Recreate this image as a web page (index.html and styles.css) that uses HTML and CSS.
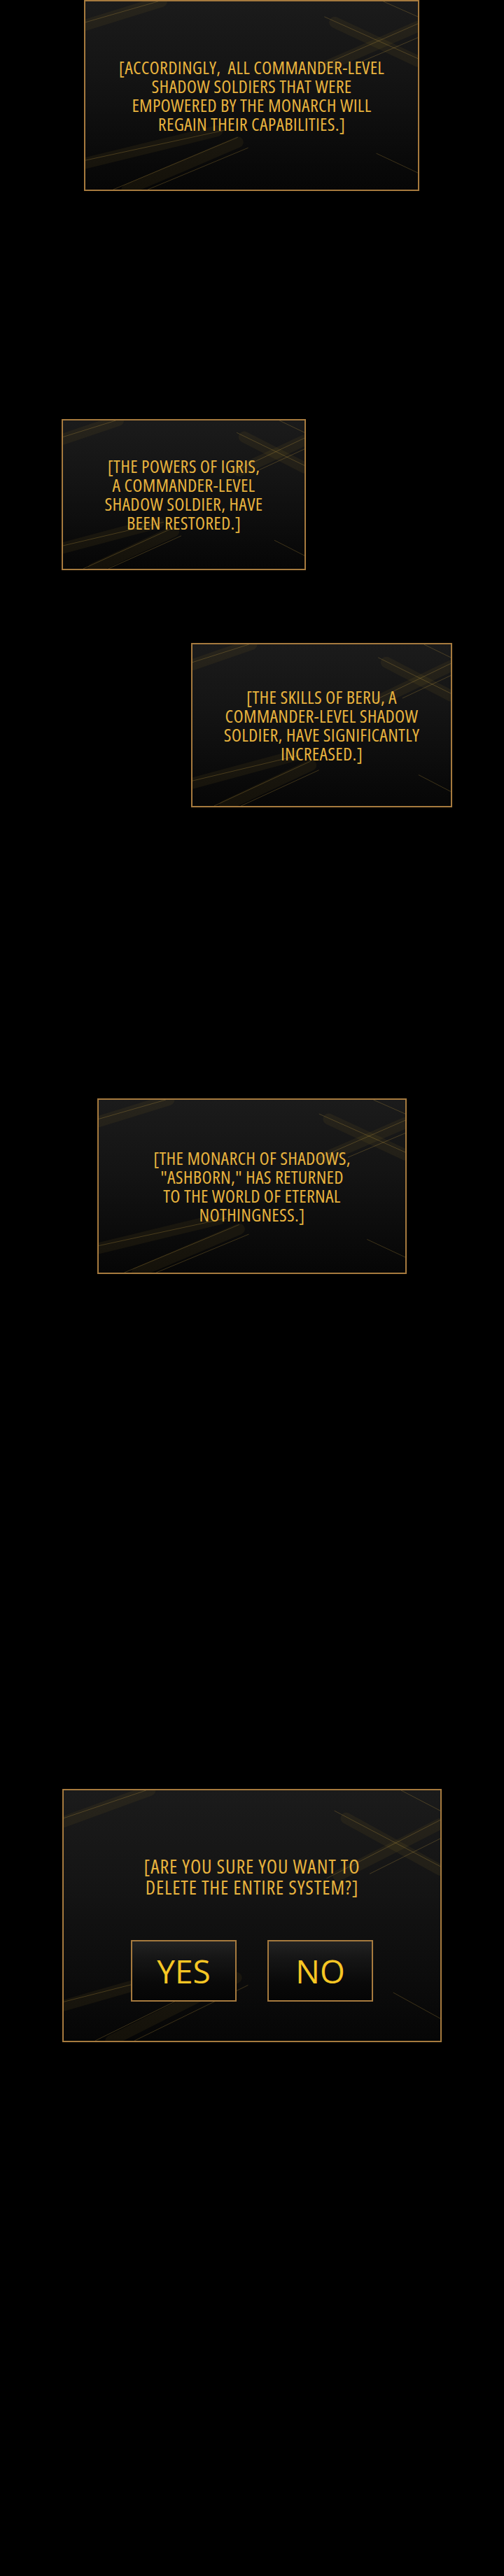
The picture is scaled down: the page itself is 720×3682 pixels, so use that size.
FILE: index.html
```html
<!DOCTYPE html>
<html lang="en">
<head>
<meta charset="utf-8">
<title>System</title>
<link rel="stylesheet" href="styles.css">
</head>
<body>
<main class="page">

  <section class="panel p1">
    <svg class="streaks" viewBox="0 0 480 270" preserveAspectRatio="none" aria-hidden="true">
      <g class="glow">
        <line x1="0" y1="34" x2="110" y2="0"/>
        <line x1="360" y1="30" x2="480" y2="86"/>
        <line x1="350" y1="92" x2="480" y2="36"/>
        <line x1="0" y1="232" x2="190" y2="186"/>
        <line x1="60" y1="270" x2="220" y2="202"/>
      </g>
      <g class="lines">
        <line x1="0" y1="30" x2="105" y2="0"/>
        <line x1="345" y1="22" x2="480" y2="82"/>
        <line x1="335" y1="95" x2="480" y2="32"/>
        <line x1="390" y1="90" x2="480" y2="52"/>
        <line x1="430" y1="0" x2="480" y2="22"/>
        <line x1="0" y1="228" x2="200" y2="185"/>
        <line x1="40" y1="270" x2="220" y2="195"/>
        <line x1="90" y1="270" x2="235" y2="210"/>
        <line x1="420" y1="218" x2="480" y2="246"/>
      </g>
    </svg>
    <p class="msg">[ACCORDINGLY,&nbsp; ALL COMMANDER-LEVEL<br>SHADOW SOLDIERS THAT WERE<br>EMPOWERED BY THE MONARCH WILL<br>REGAIN THEIR CAPABILITIES.]</p>
  </section>

  <section class="panel p2">
    <svg class="streaks" viewBox="0 0 480 270" preserveAspectRatio="none" aria-hidden="true">
      <g class="glow">
        <line x1="0" y1="34" x2="110" y2="0"/>
        <line x1="360" y1="30" x2="480" y2="86"/>
        <line x1="350" y1="92" x2="480" y2="36"/>
        <line x1="0" y1="232" x2="190" y2="186"/>
        <line x1="60" y1="270" x2="220" y2="202"/>
      </g>
      <g class="lines">
        <line x1="0" y1="30" x2="105" y2="0"/>
        <line x1="345" y1="22" x2="480" y2="82"/>
        <line x1="335" y1="95" x2="480" y2="32"/>
        <line x1="390" y1="90" x2="480" y2="52"/>
        <line x1="430" y1="0" x2="480" y2="22"/>
        <line x1="0" y1="228" x2="200" y2="185"/>
        <line x1="40" y1="270" x2="220" y2="195"/>
        <line x1="90" y1="270" x2="235" y2="210"/>
        <line x1="420" y1="218" x2="480" y2="246"/>
      </g>
    </svg>
    <p class="msg">[THE POWERS OF IGRIS,<br>A COMMANDER-LEVEL<br>SHADOW SOLDIER, HAVE<br>BEEN RESTORED.]</p>
  </section>

  <section class="panel p3">
    <svg class="streaks" viewBox="0 0 480 270" preserveAspectRatio="none" aria-hidden="true">
      <g class="glow">
        <line x1="0" y1="34" x2="110" y2="0"/>
        <line x1="360" y1="30" x2="480" y2="86"/>
        <line x1="350" y1="92" x2="480" y2="36"/>
        <line x1="0" y1="232" x2="190" y2="186"/>
        <line x1="60" y1="270" x2="220" y2="202"/>
      </g>
      <g class="lines">
        <line x1="0" y1="30" x2="105" y2="0"/>
        <line x1="345" y1="22" x2="480" y2="82"/>
        <line x1="335" y1="95" x2="480" y2="32"/>
        <line x1="390" y1="90" x2="480" y2="52"/>
        <line x1="430" y1="0" x2="480" y2="22"/>
        <line x1="0" y1="228" x2="200" y2="185"/>
        <line x1="40" y1="270" x2="220" y2="195"/>
        <line x1="90" y1="270" x2="235" y2="210"/>
        <line x1="420" y1="218" x2="480" y2="246"/>
      </g>
    </svg>
    <p class="msg">[THE SKILLS OF BERU, A<br>COMMANDER-LEVEL SHADOW<br>SOLDIER, HAVE SIGNIFICANTLY<br>INCREASED.]</p>
  </section>

  <section class="panel p4">
    <svg class="streaks" viewBox="0 0 480 270" preserveAspectRatio="none" aria-hidden="true">
      <g class="glow">
        <line x1="0" y1="34" x2="110" y2="0"/>
        <line x1="360" y1="30" x2="480" y2="86"/>
        <line x1="350" y1="92" x2="480" y2="36"/>
        <line x1="0" y1="232" x2="190" y2="186"/>
        <line x1="60" y1="270" x2="220" y2="202"/>
      </g>
      <g class="lines">
        <line x1="0" y1="30" x2="105" y2="0"/>
        <line x1="345" y1="22" x2="480" y2="82"/>
        <line x1="335" y1="95" x2="480" y2="32"/>
        <line x1="390" y1="90" x2="480" y2="52"/>
        <line x1="430" y1="0" x2="480" y2="22"/>
        <line x1="0" y1="228" x2="200" y2="185"/>
        <line x1="40" y1="270" x2="220" y2="195"/>
        <line x1="90" y1="270" x2="235" y2="210"/>
        <line x1="420" y1="218" x2="480" y2="246"/>
      </g>
    </svg>
    <p class="msg">[THE MONARCH OF SHADOWS,<br>"ASHBORN," HAS RETURNED<br>TO THE WORLD OF ETERNAL<br>NOTHINGNESS.]</p>
  </section>

  <section class="panel p5">
    <svg class="streaks" viewBox="0 0 480 270" preserveAspectRatio="none" aria-hidden="true">
      <g class="glow">
        <line x1="0" y1="34" x2="110" y2="0"/>
        <line x1="360" y1="30" x2="480" y2="86"/>
        <line x1="350" y1="92" x2="480" y2="36"/>
        <line x1="0" y1="232" x2="190" y2="186"/>
        <line x1="60" y1="270" x2="220" y2="202"/>
      </g>
      <g class="lines">
        <line x1="0" y1="30" x2="105" y2="0"/>
        <line x1="345" y1="22" x2="480" y2="82"/>
        <line x1="335" y1="95" x2="480" y2="32"/>
        <line x1="390" y1="90" x2="480" y2="52"/>
        <line x1="430" y1="0" x2="480" y2="22"/>
        <line x1="0" y1="228" x2="200" y2="185"/>
        <line x1="40" y1="270" x2="220" y2="195"/>
        <line x1="90" y1="270" x2="235" y2="210"/>
        <line x1="420" y1="218" x2="480" y2="246"/>
      </g>
    </svg>
    <p class="msg msg-lg">[ARE YOU SURE YOU WANT TO<br>DELETE THE ENTIRE SYSTEM?]</p>
    <div class="choices">
      <button class="choice" type="button">YES</button>
      <button class="choice" type="button">NO</button>
    </div>
  </section>

</main>
</body>
</html>
```
FILE: styles.css
```css
html, body {
  margin: 0;
  padding: 0;
  background: #000;
}

.page {
  display: flex;
  flex-direction: column;
  align-items: flex-start;
  height: 3682px;
  background: #000;
  font-family: "Open Sans", "DejaVu Sans", sans-serif;
}

.panel {
  position: relative;
  box-sizing: border-box;
  display: flex;
  flex-direction: column;
  align-items: center;
  justify-content: center;
  border: 2px solid #a67a3e;
  background: linear-gradient(180deg, #1b1b1b 0%, #141414 40%, #0b0b0b 78%, #060606 100%);
  overflow: hidden;
}

.p1 { margin: 0 0 0 120px; width: 479px; height: 273px; }
.p2 { margin: 326px 0 0 88px; width: 349px; height: 216px; }
.p3 { margin: 104px 0 0 273px; width: 373px; height: 235px; }
.p4 { margin: 416px 0 0 139px; width: 442px; height: 251px; }
.p5 {
  margin: 736px 0 0 89px;
  width: 542px;
  height: 362px;
  justify-content: flex-start;
  padding-top: 93px;
}

.streaks {
  position: absolute;
  inset: 0;
  width: 100%;
  height: 100%;
  pointer-events: none;
}

.streaks .lines line {
  stroke: #caa045;
  stroke-width: 1;
  stroke-opacity: 0.28;
  vector-effect: non-scaling-stroke;
}

.streaks .glow line {
  stroke: #a8802c;
  stroke-width: 16;
  stroke-opacity: 0.09;
  stroke-linecap: round;
  vector-effect: non-scaling-stroke;
}

.msg {
  position: relative;
  margin: 0;
  font-size: 26px;
  line-height: 27px;
  font-stretch: 75%;
  letter-spacing: 0.3px;
  font-weight: 400;
  color: #e8b33e;
  text-align: center;
  white-space: nowrap;
}

.msg-lg {
  font-size: 28px;
  line-height: 30px;
  letter-spacing: 0.9px;
}

.choices {
  position: relative;
  display: flex;
  gap: 44px;
  margin-top: 61px;
}

.choice {
  box-sizing: border-box;
  width: 151px;
  height: 88px;
  display: flex;
  align-items: center;
  justify-content: center;
  padding: 0;
  border: 2px solid #a67a3e;
  background: linear-gradient(180deg, #222 0%, #151515 30%, #090909 70%, #050505 100%);
  font-family: "Open Sans", "DejaVu Sans", sans-serif;
  font-size: 46px;
  font-stretch: 94%;
  font-weight: 400;
  line-height: 1;
  color: #f6c624;
}
```
